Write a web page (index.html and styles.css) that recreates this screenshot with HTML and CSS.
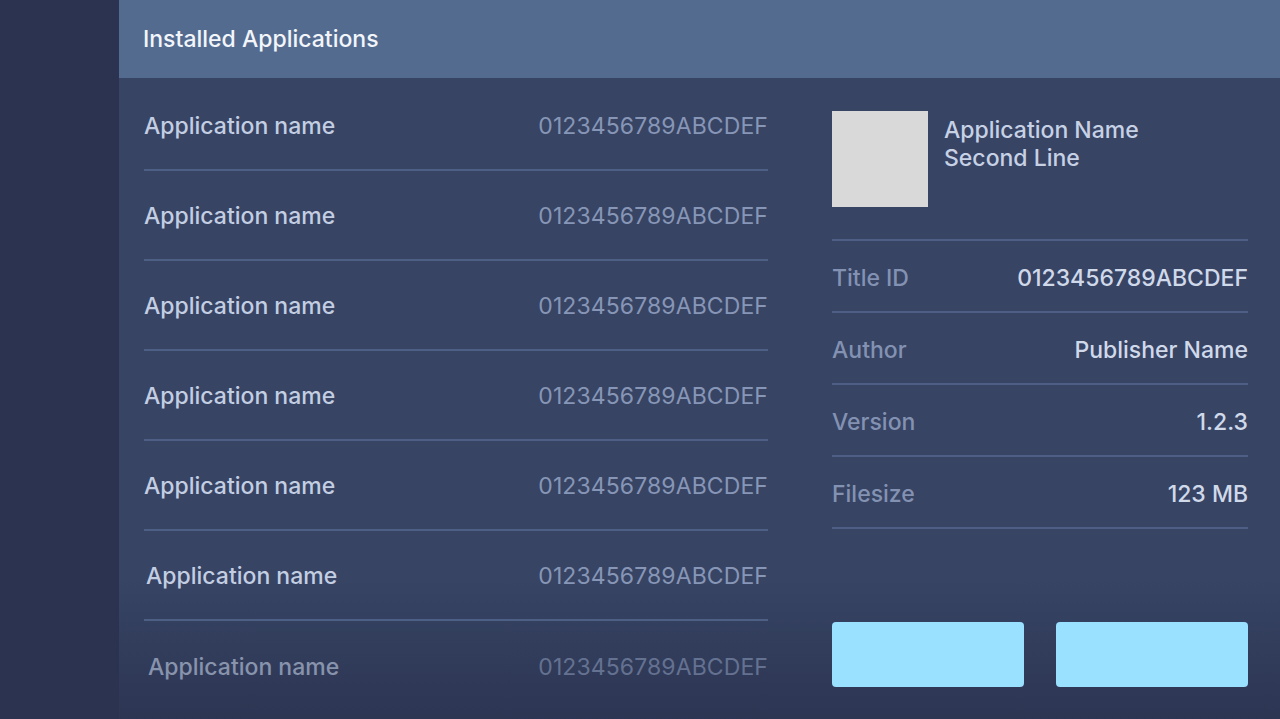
FILE: index.html
```html
<!DOCTYPE html>
<html>
<head>
<meta charset="utf-8">
<link rel="stylesheet" href="styles.css">
</head>
<body>
<div class="app">
  <aside class="sidebar"></aside>
  <main class="main">
    <header class="header">Installed Applications</header>
    <div class="content">
      <ul class="list">
        <li class="row"><span class="name">Application name</span><span class="id">0123456789ABCDEF</span></li>
        <li class="row"><span class="name">Application name</span><span class="id">0123456789ABCDEF</span></li>
        <li class="row"><span class="name">Application name</span><span class="id">0123456789ABCDEF</span></li>
        <li class="row"><span class="name">Application name</span><span class="id">0123456789ABCDEF</span></li>
        <li class="row"><span class="name">Application name</span><span class="id">0123456789ABCDEF</span></li>
        <li class="row shift"><span class="name">Application name</span><span class="id">0123456789ABCDEF</span></li>
        <li class="row faded"><span class="name">Application name</span><span class="id">0123456789ABCDEF</span></li>
      </ul>
      <section class="detail">
        <div class="top">
          <div class="icon"></div>
          <div class="title">Application Name<br>Second Line</div>
        </div>
        <dl class="info">
          <div class="irow"><dt>Title ID</dt><dd>0123456789ABCDEF</dd></div>
          <div class="irow"><dt>Author</dt><dd>Publisher Name</dd></div>
          <div class="irow"><dt>Version</dt><dd>1.2.3</dd></div>
          <div class="irow"><dt>Filesize</dt><dd>123 MB</dd></div>
        </dl>
        <div class="buttons">
          <button class="btn"></button>
          <button class="btn"></button>
        </div>
      </section>
    </div>
    <div class="fade"></div>
  </main>
</div>
</body>
</html>
```

FILE: styles.css
```css
* { box-sizing: border-box; margin: 0; padding: 0; }
html, body { width: 1280px; height: 719px; overflow: hidden; }
body { font-family: "Inter", "Noto Sans", sans-serif; background: #2b3350; }
.app { display: flex; width: 1280px; height: 719px; }
.sidebar { width: 119px; background: #2b3350; flex: none; }
.main { position: relative; flex: 1; display: flex; flex-direction: column; background: #374464; overflow: hidden; }
.header { height: 78px; flex: none; background: #546b90; color: #f2f5fa; font-size: 23px; font-weight: 500; padding-left: 24px; display: flex; align-items: center; padding-bottom: 1px; position: relative; z-index: 1; }
.content { flex: 1; display: flex; padding: 3px 32px 0 25px; gap: 64px; position: relative; z-index: 1; }
.list { list-style: none; width: 624px; flex: none; }
.row { height: 90px; display: flex; justify-content: space-between; align-items: center; border-bottom: 2px solid #4e5f86; padding-top: 2px; }
.name { font-size: 23px; color: #c3cee3; font-weight: 500; }
.id { font-size: 23px; color: #8796b6; letter-spacing: 0.1px; }
.shift { padding-left: 2px; }
.faded { border-bottom: none; opacity: 0.6; padding-left: 4px; }
.detail { flex: 1; display: flex; flex-direction: column; padding-top: 30px; }
.top { display: flex; gap: 16px; padding-bottom: 32px; border-bottom: 2px solid #4e5f86; }
.icon { width: 96px; height: 96px; background: #d9d9d9; flex: none; }
.title { color: #c7d1e5; font-size: 23px; line-height: 28px; font-weight: 500; padding-top: 5px; }
.info { display: flex; flex-direction: column; }
.irow { height: 72px; display: flex; justify-content: space-between; align-items: center; border-bottom: 2px solid #4e5f86; padding-top: 3px; }
dt { font-size: 23px; color: #8392b2; font-weight: 500; }
dd { font-size: 23px; color: #d0d9ea; font-weight: 500; }
.buttons { display: flex; justify-content: space-between; margin-top: 93px; }
.btn { width: 192px; height: 65px; border: none; border-radius: 4px; background: #9ae0ff; }
.fade { position: absolute; left: 0; right: 0; bottom: 0; height: 140px; z-index: 0; background: linear-gradient(to bottom, rgba(43,51,80,0) 0%, rgba(43,51,80,0.85) 100%); pointer-events: none; }
```
